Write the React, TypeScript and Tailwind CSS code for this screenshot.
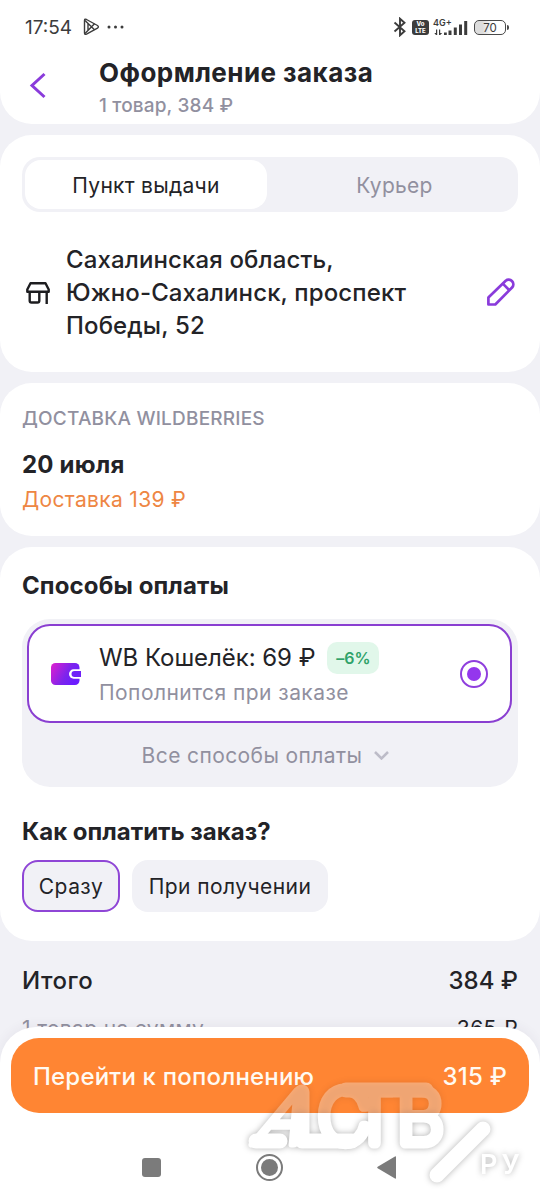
import React from "react";
import clsx from "clsx";

const tabs = [
  { label: "Пункт выдачи", active: true },
  { label: "Курьер", active: false },
];

function StatusBar() {
  return (
    <div className="flex h-[54px] items-center justify-between pl-[25px] pr-[31px] text-[#3c3c3c]">
      <div className="flex items-center">
        <span className="w-[58px] pt-px text-[19px] leading-6">17:54</span>
        <svg className="h-[18px] w-[17px]" viewBox="0 0 17 18" fill="none" stroke="currentColor" strokeWidth="1.4" strokeLinejoin="round">
          <path d="M1.5 2.5q0-2 2-1l11 6q1.8 1.3 0 2.6l-11 6q-2 .8-2-1z" />
          <path d="m2 2.5 9.5 9.3M2 15.5l9.5-9.7M5 5.5v7" />
        </svg>
        <svg className="ml-[7px] h-1 w-[17px]" viewBox="0 0 17 4" fill="currentColor">
          <circle cx="2" cy="2" r="1.5" />
          <circle cx="8.5" cy="2" r="1.5" />
          <circle cx="15" cy="2" r="1.5" />
        </svg>
      </div>
      <div className="flex items-center">
        <svg className="h-5 w-3.5" viewBox="0 0 14 20" fill="none" stroke="currentColor" strokeWidth="1.9">
          <path d="m1.5 5.5 10 8.7L7 18.3V1.7l4.5 4.1-10 8.7" />
        </svg>
        <div className="ml-[5px] flex h-[15px] w-[17px] flex-col items-center justify-center rounded-[3px] bg-[#3c3c3c] text-[6px] font-extrabold leading-[7px] text-white">
          <span>Vo</span>
          <span>LTE</span>
        </div>
        <div className="relative ml-1 h-[18px] w-[35px]">
          <span className="absolute top-0 left-0 text-[9px] font-semibold leading-[9px]">4G+</span>
          <svg className="size-full" viewBox="0 0 35 18" fill="currentColor">
            <path d="M3 11.5h1.2V17H3l-1.7-2H3zM6 17h1.2l2-2H7.2v-3.5H6z" />
            <path d="M11 14.5h2.8V17H11zM15.5 12.5h3V17h-3zM20.8 9.5h3V17h-3zM26 6.5h3V17h-3zM31.2 3h3v14h-3z" />
          </svg>
        </div>
        <div className="ml-1.5 flex h-[15px] w-8 items-center justify-center rounded-[5px] border-[1.5px] border-[#4a4a4a] bg-linear-to-r from-[#dddddd] from-25% to-white to-60% pt-px text-[11.5px] leading-[12px]">
          70
        </div>
        <div className="ml-px h-[5px] w-0.5 rounded-r bg-[#4a4a4a]" />
      </div>
    </div>
  );
}

function WalletIcon() {
  return (
    <svg className="h-[22px] w-[30px]" viewBox="0 0 30 22">
      <defs>
        <linearGradient id="wallet" x1="0" y1="0" x2="1" y2="0.45">
          <stop stopColor="#e01fce" />
          <stop offset="0.65" stopColor="#7b24ed" />
          <stop offset="1" stopColor="#6c1cff" />
        </linearGradient>
      </defs>
      <rect width="28.5" height="22" rx="4.5" fill="url(#wallet)" />
      <rect x="18" y="6.3" width="16" height="9.4" rx="4.7" fill="#fff" />
      <path d="M30 8h-6.5a3 3 0 0 0 0 6H30z" fill="#6f1ff8" />
    </svg>
  );
}

function Watermark() {
  return (
    <svg
      className="pointer-events-none absolute bottom-0 right-0 h-[130px] w-[300px] drop-shadow-[0_0_3px_rgba(0,0,0,0.3)]"
      viewBox="0 0 300 130"
      fontFamily="Inter, sans-serif"
    >
      {/* translucent over the button, solid below it */}
      <mask id="fade" maskUnits="userSpaceOnUse" x="0" y="0" width="300" height="130">
        <rect width="300" height="43" fill="#fff" fillOpacity="0.33" />
        <rect y="43" width="300" height="87" fill="#fff" />
      </mask>
      <g mask="url(#fade)" fill="#fff" stroke="#fff" strokeLinejoin="round" strokeLinecap="round">
        <text transform="translate(11 73) skewX(-25)" fontSize="73" fontWeight="100" strokeWidth="9">
          А
        </text>
        <text x="78 112 157" y="73" fontSize="73" fontWeight="100" strokeWidth="11">
          СТВ
        </text>
        <path strokeWidth="15" d="M106 20h80M16 71h24M62 71h50M62 22v48" />
      </g>
      <path d="M243 59 197 105" stroke="#fff" strokeWidth="15" strokeLinecap="round" />
      <text x="240" y="104" fontSize="27" fontWeight="600" letterSpacing="4" fill="#fff">
        РУ
      </text>
    </svg>
  );
}

function App() {
  return (
    <div className="relative h-[1200px] w-[540px] overflow-hidden bg-[#f1f1f6] font-['Inter',sans-serif] text-[#232327]">
      <header className="h-[124px] rounded-b-[32px] bg-white">
        <StatusBar />
        <div className="flex items-center">
          <svg className="-mt-[7px] ml-[29px] h-7 w-[18px]" viewBox="0 0 18 28" fill="none" stroke="#8a3bdb" strokeWidth="3">
            <path d="M15.5 3 3 14.5 15.5 26" />
          </svg>
          <div className="ml-[52px] pt-[3px]">
            <h1 className="text-[26px] font-bold leading-8 tracking-[0.45px]">Оформление заказа</h1>
            <p className="pt-px text-[19px] font-medium leading-8 tracking-[0.15px] text-[#91909f]">1 товар, 384 ₽</p>
          </div>
        </div>
      </header>

      {/* Pickup point */}
      <section className="mt-[11px] h-[237px] rounded-[32px] bg-white px-[22px] pt-[22px]">
        <div className="flex h-[55px] rounded-[18px] bg-[#f1f1f6] p-[3px]">
          {tabs.map((tab) => (
            <div
              key={tab.label}
              className={clsx(
                "flex items-center justify-center rounded-2xl pt-0.5 text-[21px] tracking-[0.3px]",
                tab.active ? "w-[242px] bg-white" : "flex-1 pl-[7px] text-[#91909f]"
              )}
            >
              {tab.label}
            </div>
          ))}
        </div>
        <div className="mt-[31px] flex items-center">
          <svg className="ml-1 h-[22px] w-6" viewBox="0 0 24 22" fill="none" stroke="#1d1d20" strokeWidth="2.4" strokeLinejoin="round">
            <path d="M4.5 1.3h15l3.2 6.2v2.2H1.3V7.5z" />
            <path d="M3.7 9.7v9q0 1.8 1.8 1.8h6q1.8 0 1.8-1.8v-9M20.7 9.7V22" />
          </svg>
          <p className="ml-4 w-[410px] text-2xl font-medium leading-[33px] tracking-[0.13px]">
            Сахалинская область,
            <br />
            Южно-Сахалинск, проспект
            <br />
            Победы, 52
          </p>
          <svg className="-mt-0.5 ml-[11px] h-7 w-7" viewBox="0 0 28 28" fill="none" stroke="#8a3bdb" strokeWidth="2.7" strokeLinejoin="round">
            <path d="M1.4 26.5v-7L18.7 2.7a4.7 4.7 0 0 1 6.6 6.6L8.3 26.5z" />
            <path d="m15.8 5.6 6.6 6.6" />
          </svg>
        </div>
      </section>

      {/* Delivery */}
      <section className="mt-[11px] h-[153px] rounded-[32px] bg-white px-[22px] pt-5">
        <h2 className="text-[19px] font-medium leading-8 tracking-[0.2px] text-[#91909f]">ДОСТАВКА WILDBERRIES</h2>
        <p className="mt-3.5 text-2xl font-bold leading-8 tracking-[0.2px]">20 июля</p>
        <p className="mt-[3px] text-[21px] leading-8 tracking-[0.33px] text-[#ee8643]">Доставка 139 ₽</p>
      </section>

      {/* Payment */}
      <section className="mt-[11px] h-[394px] rounded-[32px] bg-white px-[22px] pt-[23px]">
        <h2 className="text-2xl font-bold leading-8 tracking-[0.12px]">Способы оплаты</h2>
        <div className="mt-[17px] h-[168px] rounded-[28px] bg-[#f1f1f6] pl-[5px] pr-1.5 pt-[5px]">
          <div className="flex h-[99px] items-center rounded-[23px] border-2 border-[#8a3fd1] bg-white px-[22px]">
            <WalletIcon />
            <div className="ml-[18px] flex-1 pt-0.5">
              <div className="flex h-[35px] items-center pt-0.5 text-2xl tracking-[-0.05px]">
                WB Кошелёк: 69 ₽
                <span className="ml-3 flex h-8 w-[52px] items-center justify-center rounded-[10px] bg-[#e1f7ea] text-base font-semibold text-[#2fa269]">
                  –6%
                </span>
              </div>
              <p className="h-[35px] text-[21px] leading-[35px] tracking-[0.45px] text-[#91909f]">Пополнится при заказе</p>
            </div>
            <div className="flex size-7 items-center justify-center rounded-full border-[2.5px] border-[#8f3fdd]">
              <div className="size-3.5 rounded-full bg-[#9437ed]" />
            </div>
          </div>
          <div className="flex h-16 items-center justify-center pr-2 pt-px text-[21px] tracking-[0.4px] text-[#91909f]">
            Все способы оплаты
            <svg className="ml-3 h-[9px] w-[15px]" viewBox="0 0 15 9" fill="none" stroke="#bdbcc8" strokeWidth="2.5">
              <path d="m1 1 6.5 6.5L14 1" />
            </svg>
          </div>
        </div>
        <h2 className="mt-[29px] text-2xl font-bold leading-8">Как оплатить заказ?</h2>
        <div className="mt-3 flex gap-3 text-[21px] tracking-[0.45px]">
          <div className="flex h-[52px] w-[98px] items-center justify-center rounded-2xl border-2 border-[#8f46d6] bg-[#f1f1f6] pt-0.5">Сразу</div>
          <div className="flex h-[52px] w-[196px] items-center justify-center rounded-2xl bg-[#f1f1f6] pt-0.5">При получении</div>
        </div>
      </section>

      {/* Totals */}
      <section className="px-[22px] pt-6">
        <div className="flex justify-between text-2xl font-medium leading-8">
          <span className="tracking-[0.5px]">Итого</span>
          <span>384 ₽</span>
        </div>
        <div className="mt-4 flex justify-between text-[21px] leading-8 tracking-[0.35px]">
          <span className="text-[#91909f]">1 товар на сумму</span>
          <span>365 ₽</span>
        </div>
      </section>

      {/* Sticky checkout bar and system navigation */}
      <footer className="absolute inset-x-0 bottom-0 h-[173px] rounded-t-[36px] bg-white px-[11px] pt-[11px] shadow-[0_-2px_12px_rgba(60,50,90,0.06)]">
        <button className="flex h-[75px] w-full items-center justify-between rounded-[28px] bg-[#ff8533] px-[22px] pt-0.5 text-2xl font-medium tracking-[0.2px] text-[#fffaf2]">
          <span>Перейти к пополнению</span>
          <span>315 ₽</span>
        </button>
        <nav className="mt-10 flex h-7 items-center text-[#7b7b7b]">
          <div className="ml-[131px] size-[19px] rounded-[3px] bg-current" />
          <div className="ml-[95px] flex size-[27px] items-center justify-center rounded-full border-2 border-current">
            <div className="size-[17px] rounded-full bg-current" />
          </div>
          <svg className="ml-[94px] h-[23px] w-[19px]" viewBox="0 0 19 23" fill="currentColor">
            <path d="M19 1v21q0 1-1 .5L.7 12.3q-1-.8 0-1.6L18 .5q1-.5 1 .5z" />
          </svg>
        </nav>
      </footer>
      <Watermark />
    </div>
  );
}

export default App;
